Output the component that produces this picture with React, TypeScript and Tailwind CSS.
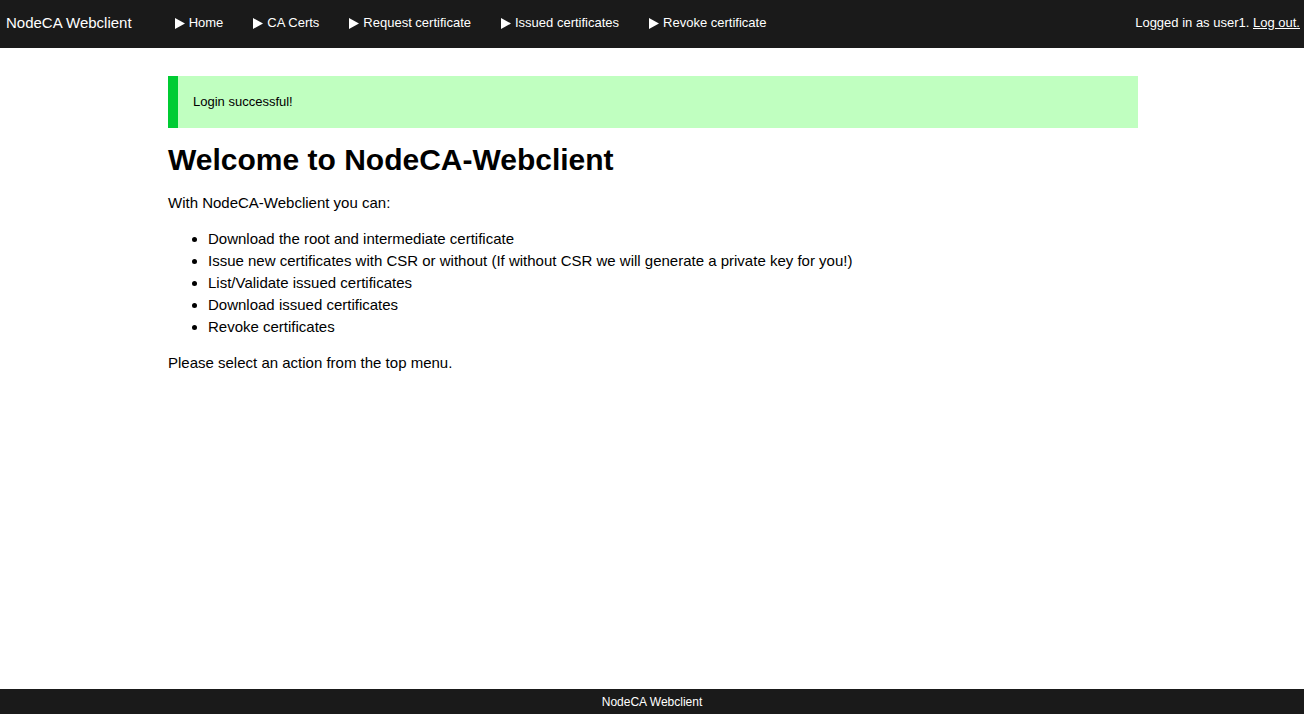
import React from 'react';

const navItems = [
  'Home',
  'CA Certs',
  'Request certificate',
  'Issued certificates',
  'Revoke certificate',
];

const features = [
  'Download the root and intermediate certificate',
  'Issue new certificates with CSR or without (If without CSR we will generate a private key for you!)',
  'List/Validate issued certificates',
  'Download issued certificates',
  'Revoke certificates',
];

const Arrow: React.FC = () => (
  <svg width="10" height="11" viewBox="0 0 10 11" className="mr-[4px]">
    <path d="M0 0 L10 5.5 L0 11 Z" fill="currentColor" />
  </svg>
);

const App: React.FC = () => {
  return (
    <div
      className="flex min-h-screen flex-col bg-white text-black"
      style={{ fontFamily: '"Liberation Sans", Arial, sans-serif' }}
    >
      <header className="flex h-12 items-center bg-[#1a1a1a] pb-[2px] text-white">
        <div className="pl-[6px] pr-[28px] text-[15px]">NodeCA Webclient</div>
        <nav className="flex items-center">
          {navItems.map((item) => (
            <a
              key={item}
              href="#"
              className="flex items-center px-[15px] text-[13px] text-white"
            >
              <Arrow />
              {item}
            </a>
          ))}
        </nav>
        <div className="ml-auto pr-[4px] text-[13px]">
          Logged in as user1.{' '}
          <a href="#" className="underline">
            Log out.
          </a>
        </div>
      </header>

      <main className="mx-auto w-[972px] flex-1 pl-[2px] pt-[28px]">
        <div className="flex h-[52px] items-center border-l-[10px] border-[#00cc33] bg-[#c0ffc0] pl-[15px] text-[13px]">
          Login successful!
        </div>
        <h1 className="mt-[12px] mb-[12px] text-[30px] leading-[40px] font-bold">
          Welcome to NodeCA-Webclient
        </h1>
        <div className="text-[15px] leading-[22px]">
          <p className="mb-[14px]">With NodeCA-Webclient you can:</p>
          <ul className="mb-[14px] list-disc pl-[40px]">
            {features.map((f) => (
              <li key={f}>{f}</li>
            ))}
          </ul>
          <p>Please select an action from the top menu.</p>
        </div>
      </main>

      <footer className="flex h-[25px] items-center justify-center bg-[#1a1a1a] text-[12px] text-white">
        NodeCA Webclient
      </footer>
    </div>
  );
};

export default App;
